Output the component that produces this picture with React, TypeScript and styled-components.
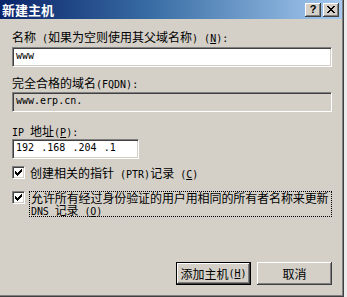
import React from 'react';
import styled, { createGlobalStyle } from 'styled-components';

const Global = createGlobalStyle`
  html, body { margin: 0; padding: 0; background: #ececec; }
  body {
    font-family: "Noto Sans CJK SC", "Noto Sans", sans-serif;
    font-size: 12px;
    color: #000;
  }
`;

const Dialog = styled.div`
  box-sizing: border-box;
  width: 344px;
  height: 297px;
  padding: 0 1px 1px 0;
  background: #d4d0c8;
  border-right: 1px solid #404040;
  border-bottom: 1px solid #404040;
  box-shadow: inset -1px -1px 0 #808080;
  display: flex;
  flex-direction: column;
`;

const TitleBar = styled.div`
  height: 19px;
  flex: none;
  display: flex;
  align-items: center;
  padding: 0 3px 0 2px;
  background: linear-gradient(to right, #0a246a 0%, #3a6ea5 45%, #a6caf0 100%);
`;

const TitleText = styled.div`
  color: #fff;
  font-weight: bold;
  font-size: 13px;
  line-height: 19px;
  flex: 1;
`;

const CaptionButton = styled.div<{ $gap?: number }>`
  box-sizing: border-box;
  width: 16px;
  height: 14px;
  margin-left: ${p => p.$gap ?? 0}px;
  background: #d4d0c8;
  box-shadow: inset -1px -1px 0 #404040, inset 1px 1px 0 #fff,
    inset -2px -2px 0 #808080, inset 2px 2px 0 #d4d0c8;
  display: flex;
  align-items: center;
  justify-content: center;
  font-family: "Liberation Sans", sans-serif;
  font-weight: bold;
  font-size: 11px;
  line-height: 11px;
  padding-bottom: 1px;
`;

const Body = styled.div`
  flex: 1;
  display: flex;
  flex-direction: column;
  padding: 12px 10px 10px 12px;
`;

const Label = styled.div<{ $top: number }>`
  margin-top: ${p => p.$top}px;
  height: 12px;
  line-height: 12px;
  white-space: nowrap;
`;

const Latin = styled.span`
  font-family: "DejaVu Sans Mono", monospace;
  font-size: 10px;
  line-height: 12px;
`;

const Field = styled.div<{ $top: number; $width?: number; $readOnly?: boolean }>`
  box-sizing: border-box;
  margin-top: ${p => p.$top}px;
  width: ${p => (p.$width ? `${p.$width}px` : '100%')};
  height: 20px;
  padding: 1px 3px 0 3px;
  background: ${p => (p.$readOnly ? '#d4d0c8' : '#fff')};
  border: 1px solid;
  border-color: #808080 #fff #fff #808080;
  box-shadow: inset 1px 1px 0 #404040, inset -1px -1px 0 #d4d0c8;
  font-family: "DejaVu Sans Mono", monospace;
  font-size: 10px;
  line-height: 13px;
  display: flex;
`;

const IpPart = styled.span`
  width: 27px;
`;

const IpDot = styled.span`
  width: 6px;
`;

const CheckRow = styled.div<{ $top: number }>`
  margin-top: ${p => p.$top}px;
  display: flex;
  align-items: flex-start;
  line-height: 12px;
`;

const Box = styled.div<{ $offset?: number }>`
  box-sizing: border-box;
  flex: none;
  width: 13px;
  height: 13px;
  margin-top: ${p => p.$offset ?? 0}px;
  background: #fff;
  border: 1px solid;
  border-color: #808080 #fff #fff #808080;
  box-shadow: inset 1px 1px 0 #404040, inset -1px -1px 0 #d4d0c8;
  display: flex;
  align-items: center;
  justify-content: center;
`;

const CheckText = styled.div<{ $focused?: boolean }>`
  margin-left: ${p => (p.$focused ? 4 : 5)}px;
  margin-top: 1px;
  padding: ${p => (p.$focused ? '0 0 0 1px' : '0')};
  border: ${p => (p.$focused ? '1px dotted #000' : 'none')};
  width: ${p => (p.$focused ? '300px' : 'auto')};
  box-sizing: content-box;
  line-height: 12px;
  white-space: nowrap;
`;

const TextLine = styled.div`
  height: 12px;
  line-height: 12px;
  letter-spacing: -0.1px;
`;

const ButtonRow = styled.div`
  margin-top: auto;
  display: flex;
  justify-content: flex-end;
  gap: 6px;
`;

const Button = styled.div<{ $default?: boolean }>`
  box-sizing: border-box;
  width: 75px;
  height: 23px;
  background: #d4d0c8;
  border: ${p => (p.$default ? '1px solid #000' : 'none')};
  box-shadow: inset -1px -1px 0 #404040, inset 1px 1px 0 #fff,
    inset -2px -2px 0 #808080, inset 2px 2px 0 #d4d0c8;
  display: flex;
  align-items: center;
  justify-content: center;
  line-height: 12px;
`;

const Check = () => (
  <svg width="7" height="7" viewBox="0 0 7 7" shapeRendering="crispEdges">
    <path
      fill="#000"
      d="M6 0h1v1h-1z M5 1h2v1h-2z M0 2h1v1h-1z M4 2h3v1h-3z M0 3h2v1h-2z M3 3h3v1h-3z M0 4h5v1h-5z M1 5h3v1h-3z M2 6h1v1h-1z"
    />
  </svg>
);

const CloseGlyph = () => (
  <svg width="8" height="7" viewBox="0 0 8 7" shapeRendering="crispEdges">
    <path
      fill="#000"
      d="M0 0h2v1h-2z M6 0h2v1h-2z M1 1h2v1h-2z M5 1h2v1h-2z M2 2h4v1h-4z M3 3h2v1h-2z M2 4h4v1h-4z M1 5h2v1h-2z M5 5h2v1h-2z M0 6h2v1h-2z M6 6h2v1h-2z"
    />
  </svg>
);

export default function App() {
  return (
    <>
      <Global />
      <Dialog>
        <TitleBar>
          <TitleText>新建主机</TitleText>
          <CaptionButton>?</CaptionButton>
          <CaptionButton $gap={2}>
            <CloseGlyph />
          </CaptionButton>
        </TitleBar>
        <Body>
          <Label $top={0}>
            名称<Latin> (</Latin>如果为空则使用其父域名称<Latin>) (<u>N</u>):</Latin>
          </Label>
          <Field $top={4}>www</Field>
          <Label $top={10}>
            完全合格的域名<Latin>(FQDN):</Latin>
          </Label>
          <Field $top={3} $readOnly>www.erp.cn.</Field>
          <Label $top={13}>
            <Latin>IP </Latin>地址<Latin>(<u>P</u>):</Latin>
          </Label>
          <Field $top={2} $width={127}>
            <IpPart>192</IpPart>
            <IpDot>.</IpDot>
            <IpPart>168</IpPart>
            <IpDot>.</IpDot>
            <IpPart>204</IpPart>
            <IpDot>.</IpDot>
            <IpPart>1</IpPart>
          </Field>
          <CheckRow $top={7}>
            <Box>
              <Check />
            </Box>
            <CheckText>
              创建相关的指针<Latin> (PTR)</Latin>记录<Latin> (<u>C</u>)</Latin>
            </CheckText>
          </CheckRow>
          <CheckRow $top={9}>
            <Box $offset={1}>
              <Check />
            </Box>
            <CheckText $focused>
              <TextLine>允许所有经过身份验证的用户用相同的所有者名称来更新</TextLine>
              <TextLine>
                <Latin>DNS </Latin>记录<Latin> (<u>O</u>)</Latin>
              </TextLine>
            </CheckText>
          </CheckRow>
          <ButtonRow>
            <Button $default>
              添加主机<Latin>(<u>H</u>)</Latin>
            </Button>
            <Button>取消</Button>
          </ButtonRow>
        </Body>
      </Dialog>
    </>
  );
}
